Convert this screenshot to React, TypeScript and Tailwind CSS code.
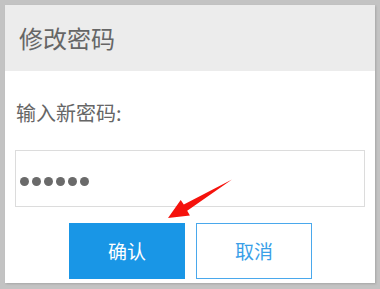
const dots = [0, 1, 2, 3, 4, 5];

const App = () => (
  <div
    className="relative h-[289px] w-[380px] bg-[#c3c3c3] pl-[5px] pt-[5px]"
    style={{ fontFamily: '"Noto Sans CJK SC", "Noto Sans", sans-serif' }}
  >
    <div className="flex h-[278px] w-[370px] flex-col bg-white shadow-[1px_1px_2px_rgba(0,0,0,0.15)]">
      {/* Header */}
      <div className="flex h-[66px] items-center bg-[#ececec] pl-[14px] text-[24px] text-[#666]">
        修改密码
      </div>

      {/* Body */}
      <div className="flex flex-col px-[10px]">
        <label className="mt-[28px] pl-[1px] text-[20px] leading-[28px] text-[#666]">输入新密码:</label>
        <div className="mt-[23px] flex h-[57px] w-[350px] items-center gap-[3px] border border-[#dcdcdc] pl-[4px] pt-[6px]">
          {dots.map((d) => (
            <span key={d} className="h-[9px] w-[9px] rounded-full bg-[#6a6a6a]" />
          ))}
        </div>
        <div className="mt-[16px] flex gap-[11px] pl-[54px]">
          <button className="flex h-[56px] w-[116px] items-center justify-center bg-[#1996e6] text-[19px] text-white">
            确认
          </button>
          <button className="flex h-[56px] w-[116px] items-center justify-center border border-[#4aa8ec] bg-white text-[19px] text-[#3a9fe8]">
            取消
          </button>
        </div>
      </div>
    </div>

    {/* Red arrow pointing at the confirm button */}
    <svg className="absolute left-0 top-0" width="380" height="289" viewBox="0 0 380 289">
      <polygon
        points="168,218 180.7,199.9 183.8,204.5 232,179.5 187.2,210.8 189.9,215.5"
        fill="#f5120c"
      />
    </svg>
  </div>
);

export default App;
